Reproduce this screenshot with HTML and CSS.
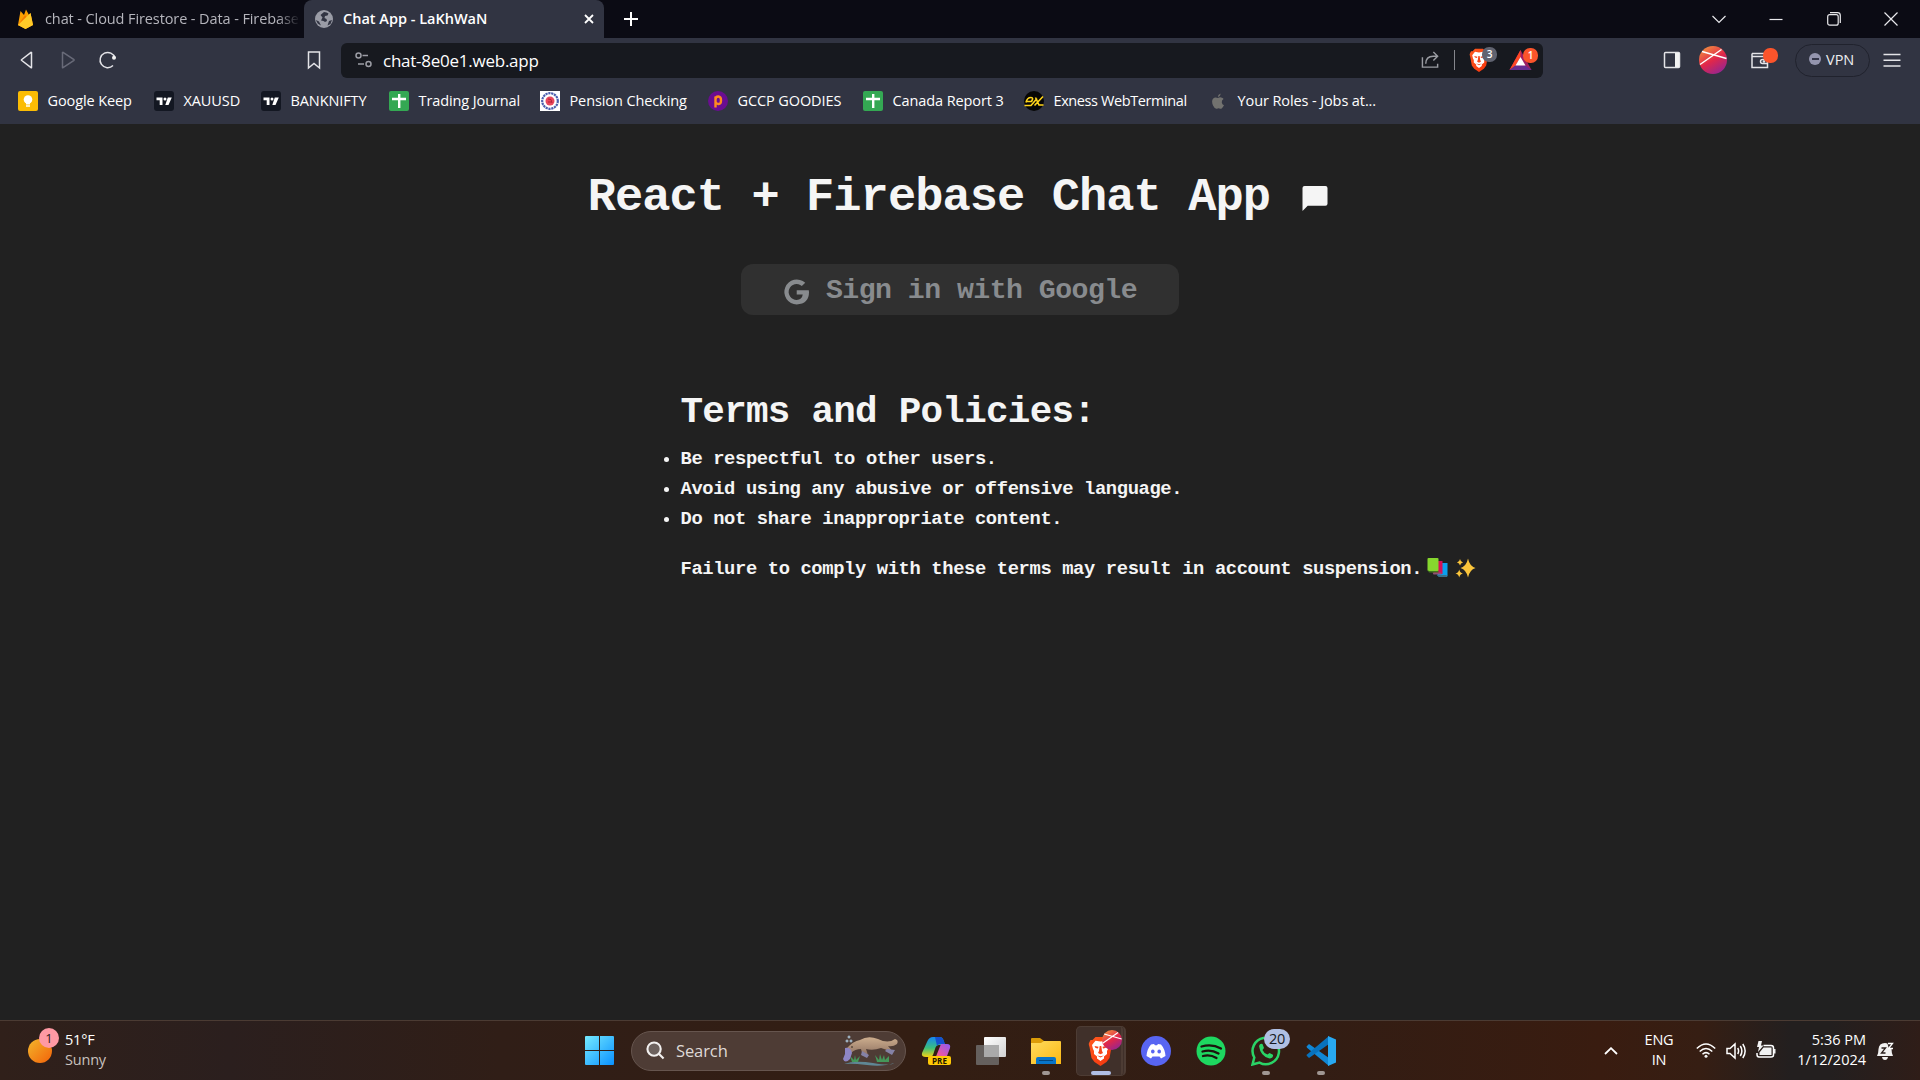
FILE: index.html
```html
<!DOCTYPE html>
<html lang="en">
<head>
<meta charset="utf-8">
<title>Chat App - LaKhWaN</title>
<link rel="stylesheet" href="styles.css">
</head>
<body>
<svg class="defs" width="0" height="0">
  <defs>
    <linearGradient id="ball" x1="0.2" y1="0" x2="0.8" y2="1"><stop offset="0" stop-color="#f2913f"/><stop offset=".5" stop-color="#e1274a"/><stop offset="1" stop-color="#8e2597"/></linearGradient>
    <linearGradient id="sun" x1="0" y1="0" x2="1" y2="1"><stop offset="0" stop-color="#f2b62c"/><stop offset="1" stop-color="#f36209"/></linearGradient>
    <linearGradient id="win" gradientUnits="userSpaceOnUse" x1="0" y1="0" x2="29" y2="29"><stop offset="0" stop-color="#75eaff"/><stop offset="1" stop-color="#0a91ff"/></linearGradient>
    <linearGradient id="fold" x1="0" y1="0" x2="1" y2="1"><stop offset="0" stop-color="#ffdc5e"/><stop offset="1" stop-color="#fbb813"/></linearGradient>
    <linearGradient id="cop1" x1="0" y1="0" x2="0" y2="1"><stop offset="0" stop-color="#1687f1"/><stop offset=".55" stop-color="#3bbf7c"/><stop offset="1" stop-color="#f6d512"/></linearGradient>
    <linearGradient id="cop2" x1="1" y1="0" x2="0" y2="1"><stop offset="0" stop-color="#8c5bf2"/><stop offset=".6" stop-color="#e556a8"/><stop offset="1" stop-color="#fa8b4b"/></linearGradient>
    <linearGradient id="white" x1="0" y1="0" x2="1" y2="1"><stop offset="0" stop-color="#fff"/><stop offset="1" stop-color="#d2d2d2"/></linearGradient>
    <linearGradient id="lionfill" x1="0" y1="0" x2="1" y2="1"><stop offset="0" stop-color="#ff5b20"/><stop offset="1" stop-color="#f5330c"/></linearGradient>
    <linearGradient id="fur" x1="0" y1="0" x2="0" y2="1"><stop offset="0" stop-color="#cdae8e"/><stop offset="1" stop-color="#8d7060"/></linearGradient>
    <symbol id="lion" viewBox="0 0 24 30">
      <path d="M7 1H17L20 4L22 4L24 8L23 11L21 22L18 26L12 30L6 26L3 22L1 11L0 8L2 4L4 4Z" fill="url(#lionfill)"/>
      <path d="M12 5.500L17 4.800L20.500 9L19.500 13L18.500 15L18.500 18L15.500 20.500L15.500 22.500L12 25L8.500 22.500L8.500 20.500L5.500 18L5.500 15L4.500 13L3.500 9L7 4.800Z" fill="#fff"/>
      <path d="M6 10L10 10.800L9.500 12.500L7 12ZM18 10L14 10.800L14.500 12.500L17 12ZM11.200 10H12.800L13.500 15L14.500 17L12 18.300L9.500 17L10.500 15ZM8.500 19.500L12 20.300L15.500 19.500L12 21.500Z" fill="#f8451a"/>
    </symbol>
    <symbol id="tv" viewBox="0 0 20 20"><rect width="20" height="20" rx="3" fill="#131722"/><path d="M2.500 6.500H8.500V14H5.700V9.300H2.500ZM13.800 6.500H17.800L14.500 14H11.300Z" fill="#fff"/><circle cx="11" cy="8" r="1.500" fill="#fff"/></symbol>
    <symbol id="sheet" viewBox="0 0 20 20"><rect width="20" height="20" rx="2" fill="#34a853"/><path d="M9 3H11.400V6.800H17V9.200H11.400V17H9V9.200H3V6.800H9Z" fill="#fff"/></symbol>
    <symbol id="ballmark" viewBox="0 0 28 28"><circle cx="14" cy="14" r="14" fill="url(#ball)"/><path d="M1 18.500L22.500 3.500M3 5.500L27.500 12.500" stroke="#fff" stroke-width="1.500" fill="none"/></symbol>
  </defs>
</svg>

<header class="browser">
  <div class="tabstrip">
    <div class="tab">
      <svg class="favicon" viewBox="0 0 20 22"><path d="M3 17L5.500 3L9 7L11 1.500L14 7L15.500 5L18 17L10.500 21Z" fill="#ffa000"/><path d="M3 17L10 7L13 11L3.500 17.500Z" fill="#f57c00"/><path d="M3 17L15.500 5L18 17L10.500 21Z" fill="#ffca28"/></svg>
      <span class="tab-title faded">chat - Cloud Firestore - Data - Firebase</span>
    </div>
    <div class="tab active">
      <svg class="favicon" viewBox="0 0 20 20"><circle cx="10" cy="10" r="9" fill="#9a9ca6"/><path d="M10 3Q13 3 14.500 4.500L13.500 6.500L11 7L10.500 9L12.500 10L13 12L11 13L9.500 12L7 11.500L8.500 8.500L6.500 6ZM2 11L5 12.500L7 16.500Q3 15 2 11ZM15 12L18 11L16.500 15L13.500 16.500Z" fill="#313442"/></svg>
      <span class="tab-title">Chat App - LaKhWaN</span>
      <svg class="close" viewBox="0 0 10 10"><path d="M1 1L9 9M9 1L1 9"/></svg>
    </div>
    <svg class="plus" viewBox="0 0 16 16"><path d="M8 1V15M1 8H15"/></svg>
    <div class="winbuttons">
      <svg viewBox="0 0 14 14"><path d="M.5 4L7 10.500L13.500 4"/></svg>
      <svg viewBox="0 0 14 14"><path d="M.5 7.500H13.500"/></svg>
      <svg viewBox="0 0 14 14"><rect x=".7" y="2.700" width="10.500" height="10.500" rx="2"/><path d="M3 .700H10.500Q13.300 .700 13.300 3.500V11"/></svg>
      <svg viewBox="0 0 14 14"><path d="M.5 .500L13.500 13.500M13.500 .500L.5 13.500"/></svg>
    </div>
  </div>

  <div class="toolbar">
    <div class="navgroup">
      <svg class="ico" viewBox="0 0 20 20"><path d="M13.500 2.500V17.500Q13.500 18 13 17.700L3.500 10.300Q3.200 10 3.500 9.700L13 2.300Z"/></svg>
      <svg class="ico dim" viewBox="0 0 20 20"><path d="M4.500 2.500V17.500Q4.500 18 5 17.700L16 10.300Q16.300 10 16 9.700L5 2.300Z"/></svg>
      <svg class="ico" viewBox="0 0 20 20"><path d="M15 15.500A7.600 7.600 0 1 1 17 8"/><circle cx="16" cy="7.800" r="2" class="solid"/></svg>
    </div>
    <svg class="ico mark" viewBox="0 0 20 20"><path d="M4.500 2H15.500V18L10 13.500L4.500 18Z"/></svg>
    <div class="urlbar">
      <svg class="ico site" viewBox="0 0 20 20"><circle cx="4.500" cy="5.500" r="2.500"/><path d="M8.500 5.500H14M4 14H10"/><circle cx="14.500" cy="14" r="2.500"/></svg>
      <span class="url">chat-8e0e1.web.app</span>
      <svg class="ico share" viewBox="0 0 20 20"><path d="M1.500 7V17.500H17.500V14M5 14Q5 6 13 6H17M13 1.500L17.500 6L13 10.500"/></svg>
      <span class="divider"></span>
      <span class="badged shield"><svg viewBox="0 0 24 30"><use href="#lion"/></svg><b class="gray">3</b></span>
      <span class="badged bat"><svg viewBox="0 0 22 20"><path d="M11 0L22 20H0Z" fill="#9e1f63"/><path d="M11 0L0 20L6 15.500L11 7Z" fill="#ff4724"/><path d="M0 20H22L16 15.500H6Z" fill="#662d91"/><path d="M11 7L16 15.500H6Z" fill="#fff"/></svg><b>1</b></span>
    </div>
    <div class="actions">
      <svg class="ico" viewBox="0 0 20 20"><rect x="2.500" y="2.500" width="15" height="15" rx="1"/><path class="solid" d="M13 3H17V17H13Z"/></svg>
      <svg class="avatar" viewBox="0 0 28 28"><use href="#ballmark"/></svg>
      <span class="badged wallet"><svg class="ico" viewBox="0 0 20 20"><path d="M2 3.500H15V6M2 3.500V17.500H17.500V6.500H2M17.500 9.500H12.500Q10.500 9.500 10.500 11.500T12.500 13.500H17.500"/><circle cx="14" cy="11.500" r=".6"/></svg><b></b></span>
      <span class="vpn"><i></i>VPN</span>
      <svg class="ico menu" viewBox="0 0 20 20"><path d="M1.500 4.500H18.500M1.500 10.300H18.500M1.500 16H18.500"/></svg>
    </div>
  </div>

  <nav class="bookmarks">
    <span><svg viewBox="0 0 20 20"><rect width="20" height="20" rx="2" fill="#fbbc04"/><circle cx="10" cy="8.500" r="4.300" fill="#fff"/><path d="M8 12H12V13.500H8ZM8 14.300H12V15.800H8Z" fill="#fff"/></svg>Google Keep</span>
    <span><svg viewBox="0 0 20 20"><use href="#tv"/></svg>XAUUSD</span>
    <span><svg viewBox="0 0 20 20"><use href="#tv"/></svg>BANKNIFTY</span>
    <span><svg viewBox="0 0 20 20"><use href="#sheet"/></svg>Trading Journal</span>
    <span><svg viewBox="0 0 20 20"><rect width="20" height="20" fill="#fff"/><circle cx="10" cy="10" r="7.800" fill="none" stroke="#4a5fae" stroke-width="2.200" stroke-dasharray="2.200 .7"/><circle cx="10" cy="10" r="4.500" fill="#e8485c"/><path d="M8 8L11 8.500L12 12M8 11H11" stroke="#b3203b" fill="none"/></svg>Pension Checking</span>
    <span><svg viewBox="0 0 20 20"><circle cx="10" cy="10" r="10" fill="#6a0d91"/><path d="M7.500 16.500V5.500M7.500 8.500Q7.500 5.500 10.300 5.500T13 9.500T10.300 13T7.500 10.500" fill="none" stroke="#ff8b1f" stroke-width="2.400"/></svg>GCCP GOODIES</span>
    <span><svg viewBox="0 0 20 20"><use href="#sheet"/></svg>Canada Report 3</span>
    <span class="tight"><svg viewBox="0 0 20 20"><circle cx="10" cy="10" r="10" fill="#060606"/><path d="M.5 14.500H7L13 7.500M2.500 10.500H7.500Q10 6.500 7 6.500Q3 6.500 2 11.500M10.500 14.500L19 5.500M11.500 6.500L15 14H19.500" fill="none" stroke="#ffd51a" stroke-width="1.600"/></svg>Exness WebTerminal</span>
    <span><svg viewBox="0 0 20 20"><path d="M10 7Q12 5.800 14 6.700Q15.300 7.200 15.500 8Q13.500 9.200 13.800 11.500Q14 13.500 16 14.200Q14 18 12.300 17.800Q10.500 17 9 17.700Q7 18.500 5 14.500Q3.200 10 5 7.700Q7 5.500 10 7ZM9.800 6Q9.800 3.500 12.500 2.500Q12.700 5.200 9.800 6Z" fill="#72726f"/></svg>Your Roles - Jobs at...</span>
  </nav>
</header>

<main class="page">
  <h1>React + Firebase Chat App <svg viewBox="0 0 24 24"><path d="M2 0H22Q24 0 24 2V17Q24 19 22 19H5L0 24V2Q0 0 2 0Z" fill="#f5f5f5"/></svg></h1>
  <button class="signin"><svg viewBox="0 0 24 24"><path d="M12.200 10.300V14.400H18Q17.200 19.600 12.200 19.600A7.600 7.600 0 1 1 17.100 6.300L20.400 3.100A12 12 0 1 0 12.200 24Q24 23.400 24 12.300L23.800 10.300Z" fill="#888b8e"/></svg>Sign in with Google</button>
  <section class="terms">
    <h2>Terms and Policies:</h2>
    <ul>
      <li>Be respectful to other users.</li>
      <li>Avoid using any abusive or offensive language.</li>
      <li>Do not share inappropriate content.</li>
    </ul>
    <p>Failure to comply with these terms may result in account suspension.<svg class="books" viewBox="0 0 20 20"><path d="M10 5H20V18H10Z" fill="#0aa0ee"/><path d="M10 17L19 17L20 19H11Z" fill="#38718c"/><path d="M6 3H15V16H6Z" fill="#d51056"/><path d="M5 14.500H14V16.500H6Z" fill="#8f5275"/><rect width="11" height="13" rx="1" fill="#86d62e"/><path d="M0 12L1.500 14.500H11V13H1.500Z" fill="#43751f"/></svg><svg class="sparkles" viewBox="0 0 20 20"><path d="M12.500 .5Q14 8 20 10Q14 12 12.500 19.500Q11 12 5 10Q11 8 12.500 .5ZM4.500 1Q5 4 7.500 4.500Q5 5 4.500 7.500Q4 5 1.500 4.500Q4 4 4.500 1ZM3.700 11.500Q4.500 15 7.400 15.500Q4.500 16 3.700 19.500Q3 16 0 15.500Q3 15 3.700 11.500Z" fill="#fbc53b"/></svg></p>
  </section>
</main>

<footer class="taskbar">
  <div class="weather">
    <span class="sunwrap"><svg viewBox="0 0 24 24"><circle cx="12" cy="12" r="12" fill="url(#sun)"/></svg><b>1</b></span>
    <div class="lines"><span>51°F</span><span class="sub">Sunny</span></div>
  </div>
  <div class="apps">
    <svg class="app start" viewBox="0 0 29 29"><path d="M0 1Q0 0 1 0H14V14H0ZM15 0H28Q29 0 29 1V14H15ZM0 15H14V29H1Q0 29 0 28ZM15 15H29V28Q29 29 28 29H15Z" fill="url(#win)"/></svg>
    <div class="search">
      <svg class="glass" viewBox="0 0 20 20"><circle cx="8.500" cy="8.500" r="7" fill="#6d625e"/><path d="M13.500 13.500L18.500 18.500"/></svg>
      <span>Search</span>
      <svg class="platypus" viewBox="0 0 56 32">
        <path d="M1 29Q12 25 30 28T51 28Q40 32 24 30T1 29Z" fill="#5f8795"/>
        <path d="M9 27L7 21L11 25L12 20L13 25L17 21L15 27ZM34 27L32 20L36 25L37 19L39 25L41 20L42 25L46 21L46 27Z" fill="#45975a"/>
        <path d="M3 14Q10 6 17 5Q25 0 35 4Q45 9 52 4Q56 5 54 9Q50 12 45 11L50 17L44 15L38 13Q30 16 23 14L25 20L20 21L18 14Q12 14 8 18Z" fill="url(#fur)"/>
        <path d="M44 14L52 15L49 20L42 16ZM19 16L26 20L24 23L18 20Z" fill="#8582a6"/>
        <path d="M2 13Q8 12 9 18L7 24Q2 29 0 24L2 19Z" fill="#8e86c5"/>
        <circle cx="9" cy="12" r=".8" fill="#241c19"/><g fill="none" stroke="#b9d9ef"><circle cx="4" cy="6" r="1"/><circle cx="8" cy="6" r="1"/><circle cx="6" cy="2" r="1"/></g>
      </svg>
    </div>
    <svg class="app" viewBox="0 0 30 30"><path d="M6 6Q8 1 12 1H19Q22 1 23 6L24 9H18Q15 9 14 13L12 19Q11 21 5 21Q0 21 1 17Z" fill="url(#cop1)"/><path d="M14 1H19Q22 1 24 8H19Q17 8 16 10Z" fill="#1450cf"/><path d="M20 8H26Q30 8 29 12L26 20Q25 23 21 23H11Q15 22 16 18Z" fill="url(#cop2)"/><rect x="7" y="20" width="23" height="9" rx="2" fill="#ffc905"/><text x="18.500" y="27.500" text-anchor="middle" class="pre">PRE</text></svg>
    <svg class="app" viewBox="0 0 30 30"><rect x="8" y="1" width="22" height="20" rx="1" fill="url(#white)"/><rect y="9" width="23" height="20" rx="1" fill="#777" fill-opacity=".75"/><path d="M8 9H23V21H8Z" fill="#aaa"/></svg>
    <span class="running"><svg class="app" viewBox="0 0 30 30"><path d="M0 3Q0 2 1 2H9L13 5V9H0Z" fill="#dc9c08"/><path d="M0 7H10L13 5H29Q30 5 30 6V28H0Z" fill="url(#fold)"/><path d="M5 28V23Q5 21 7 21H23Q25 21 25 23V28Z" fill="#0875c9"/><path d="M8 24.500H22" stroke="#03477f"/></svg></span>
    <span class="running current"><svg class="lionapp" viewBox="0 0 24 30"><use href="#lion"/></svg><svg class="overlay" viewBox="0 0 28 28"><use href="#ballmark"/></svg></span>
    <svg class="app" viewBox="0 0 30 30"><circle cx="15" cy="15" r="15" fill="#5865f2"/><path d="M10 8.500L13 8L14 9.200H16L17 8L20 8.500Q24 13 24.500 20L20 22.500L18.500 20.500H11.500L10 22.500L5.500 20Q6 13 10 8.500Z" fill="#fff"/><ellipse cx="11.800" cy="15.500" rx="1.800" ry="2" fill="#5865f2"/><ellipse cx="18.200" cy="15.500" rx="1.800" ry="2" fill="#5865f2"/></svg>
    <svg class="app" viewBox="0 0 30 30"><circle cx="15" cy="15" r="14.500" fill="#1ed760"/><path d="M5.500 10.500Q16 7.500 25 12.500M6.500 15.500Q15 13 22.500 17.500M7 20Q14 18 20.500 22" fill="none" stroke="#1c130e" stroke-width="2.300" stroke-linecap="round"/></svg>
    <span class="running wa"><svg class="app" viewBox="0 0 30 30"><path d="M1.500 28.500L3.300 21.500A13.200 13.200 0 1 1 8.500 26.600Z" fill="none" stroke="#2ad366" stroke-width="2.500"/><path d="M8 10Q9 7 11.500 8L13 12L11.500 14Q13 17.500 16.500 18.500L18.500 17L22 18.700Q22.500 22 18.500 22.500Q9.500 20.500 8 10Z" fill="#2ad366"/></svg><b>20</b></span>
    <span class="running"><svg class="app" viewBox="0 0 30 30"><path d="M.5 10.500L3 8L23 22V30L1 11.700Z" fill="#1187d5"/><path d="M.5 19.500L3 22L23 8V0L1 18.500Z" fill="#0872bd"/><path d="M22 0L30 3.500V26.500L22 30Z" fill="#28a9f2"/></svg></span>
  </div>
  <div class="tray">
    <svg class="caret" viewBox="0 0 14 8"><path d="M1 7L7 1.200L13 7"/></svg>
    <div class="lines lang"><span>ENG</span><span>IN</span></div>
    <svg class="ico" viewBox="0 0 20 20"><path d="M.8 7.500Q10-1.500 19.200 7.500M3.700 10.500Q10 4.500 16.300 10.500M6.500 13.300Q10 10 13.500 13.300"/><circle cx="10" cy="15.300" r="1.500" class="solid"/></svg>
    <svg class="ico" viewBox="0 0 20 20"><path d="M1 7.500H4L9 3V17L4 12.500H1ZM11.700 7Q13.500 10 11.700 13M14.300 5Q17.500 10 14.300 15M16.800 3Q21.500 10 16.800 17"/></svg>
    <svg class="ico" viewBox="0 0 20 20"><path d="M7.500 4.500H15Q17.500 4.500 17.500 7V14Q17.500 16 15 16H3Q1 16 1 13.500V12"/><path class="solid" d="M7.500 6.500H15.500V14H3.500V11.500ZM18 8H19.500V12.500H18ZM2.500 0L1 6H3L2 11L7.500 4.500H5L6 0Z"/></svg>
    <div class="lines clock"><span>5:36 PM</span><span>1/12/2024</span></div>
    <svg class="ico bell" viewBox="0 0 20 20"><path class="solid" d="M2 15Q3.500 12 3.500 8Q4 2 10 2Q16 2 16.500 8Q16.500 12 18 15ZM7 16H13Q12.500 19 10 19T7 16Z"/><path d="M6.500 7H10.500L6.500 12H10.500" class="zz"/><path d="M12 1H19V8H14Z" class="cut"/><path d="M13 2.500H17.500L13.500 7.500H18" class="zlight"/></svg>
  </div>
</footer>
</body>
</html>
```
FILE: styles.css
```css
* { box-sizing: border-box; }
body {
  margin: 0;
  width: 1920px;
  height: 1080px;
  overflow: hidden;
  display: flex;
  flex-direction: column;
  background: #212121;
  color: #fff;
  font-family: "Open Sans", "Noto Sans", sans-serif;
}
svg { display: block; flex: none; }
.defs { position: absolute; }

.browser { height: 124px; background: #313442; flex: none; }
.tabstrip { height: 38px; display: flex; align-items: center; background: #0b0b14; }
.tab { width: 304px; height: 38px; display: flex; align-items: center; padding-left: 15px; overflow: hidden; }
.tab .favicon { width: 20px; height: 22px; margin-right: 10px; }
.tab-title { font-size: 14.5px; letter-spacing: -0.1px; padding-bottom: 2px; white-space: nowrap; color: #b5b5bc; }
.tab-title.faded {
  width: 255px;
  overflow: hidden;
  -webkit-mask-image: linear-gradient(90deg, #000 91%, transparent);
  mask-image: linear-gradient(90deg, #000 91%, transparent);
}
.tab.active { width: 300px; padding-left: 10px; background: #313442; border-radius: 8px 8px 0 0; }
.tab.active .tab-title { color: #fff; font-weight: 600; width: 239px; letter-spacing: 0; }
.tab.active .favicon { margin-right: 9px; }
.close { width: 10px; height: 10px; margin-left: 2px; }
.close path, .plus path { stroke: #fff; stroke-width: 1.8; fill: none; }
.plus { width: 16px; height: 16px; margin-left: 19px; }
.plus path { stroke-width: 2; }
.winbuttons { margin-left: auto; display: flex; gap: 43.500px; padding-right: 22px; }
.winbuttons svg { width: 14px; height: 14px; fill: none; stroke: #e9e9ec; stroke-width: 1.2; }

.ico { width: 20px; height: 20px; fill: none; stroke: #e4e4e8; stroke-width: 1.5; }
.ico .solid { fill: #f2f2f2; stroke: none; }
.ico.dim { stroke: #686a78; }
.toolbar { height: 44px; display: flex; align-items: center; padding-left: 18px; }
.navgroup { display: flex; gap: 20px; width: 286px; }
.mark { margin-right: 17px; }
.urlbar { width: 1202px; height: 35px; background: #17191f; border-radius: 6px; display: flex; align-items: center; }
.site { margin-left: 13px; stroke: #9c9da5; }
.url { width: 1047px; padding-left: 9px; font-size: 17px; letter-spacing: -0.25px; }
.share { stroke: #9a9ca2; width: 19px; margin-right: 14px; }
.divider { width: 1px; height: 20px; background: #85868c; margin-right: 14px; }
.badged { position: relative; flex: none; }
.badged b {
  position: absolute;
  left: 13px;
  top: -3px;
  width: 15px;
  height: 15px;
  border-radius: 7px;
  background: #fb542b;
  font: 600 10px/15px "Open Sans", sans-serif;
  text-align: center;
}
.badged b.gray { background: #606370; top: -1px; }
.shield svg { width: 20px; height: 24px; }
.bat { margin-left: 20px; }
.bat svg { width: 23px; height: 20px; }
.bat b { left: 14px; top: -2px; }
.actions { display: flex; align-items: center; }
.actions > .ico:first-child { margin-left: 119px; margin-right: 17px; }
.avatar { width: 28px; height: 28px; margin-right: 23px; }
.wallet { margin-right: 25px; }
.wallet b { left: 13px; top: -2px; }
.vpn {
  width: 75px;
  height: 33px;
  border: 1px solid #20222d;
  border-radius: 17px;
  display: flex;
  align-items: center;
  padding-left: 13px;
  padding-bottom: 2px;
  gap: 5px;
  color: #ededf0;
  font-size: 14.5px;
}
.vpn i { width: 12px; height: 12px; border-radius: 50%; background: linear-gradient(#333548, #333548) center / 7px 2px no-repeat #9495ae; }
.menu { margin-left: 12px; }

.bookmarks {
  height: 38px;
  padding-left: 18px;
  display: grid;
  grid-template-columns: 136px 107px 128px 151px 168px 155px 161px 184px 200px;
  align-items: center;
  font-size: 14.5px;
  line-height: 18px;
  letter-spacing: -0.1px;
  white-space: nowrap;
}
.bookmarks span { display: flex; align-items: center; gap: 9.500px; }
.bookmarks .tight { letter-spacing: -0.4px; }
.bookmarks svg { width: 20px; height: 20px; }

.page {
  flex: 1;
  display: flex;
  flex-direction: column;
  align-items: center;
  color: #f5f5f5;
  font-family: "Liberation Mono", "DejaVu Sans Mono", monospace;
  font-weight: 700;
}
.page h1, .page h2, .page p, .page li, .signin { letter-spacing: -0.0194em; white-space: pre; }
.page h1 { margin: 42px 0 0; display: flex; font-size: 47px; line-height: 64px; }
.page h1 svg { width: 26px; height: 25px; margin: 20px 4px 0 5px; }
.signin {
  width: 438px;
  height: 51px;
  margin-top: 34px;
  padding: 2px 0 0 43px;
  border: 0;
  border-radius: 12px;
  background: #303030;
  color: #888b8e;
  font-family: inherit;
  font-weight: 700;
  font-size: 28.2px;
  display: flex;
  align-items: center;
}
.signin svg { width: 25px; height: 26px; margin-right: 17px; margin-top: 3px; }
.terms { width: 559px; margin-top: 72px; font-size: 18.8px; }
.terms h2 { margin: 0; font-size: 37.6px; line-height: 50px; }
.terms ul { margin: 7px 0 0; padding: 0; }
.terms li { line-height: 30px; }
.terms p { margin: 20px 0 0; line-height: 30px; display: flex; align-items: center; }
.books { width: 21px; height: 20px; margin: -2px 0 0 5px; }
.sparkles { width: 21px; height: 20px; margin: -2px 0 0 7px; }

.taskbar {
  flex: none;
  height: 60px;
  border-top: 1px solid #4b3b33;
  display: flex;
  align-items: center;
  background: linear-gradient(90deg, #30201a 0, #2b1f1e 230px, #301e17 500px, #331e13 900px, #321d14 1300px, #391c10 1600px, #361e13 1700px, #231f1f 1790px, #231f1f 1830px, #2f1d18 1920px);
}
.weather { width: 571px; display: flex; padding-left: 28px; align-items: center; }
.sunwrap { position: relative; margin-right: 13px; }
.sunwrap svg { width: 24px; height: 24px; }
.sunwrap b {
  position: absolute;
  left: 11px;
  top: -11px;
  width: 20px;
  height: 20px;
  border-radius: 50%;
  background: #ff99a4;
  color: #321a1a;
  font: 13px/20px "Open Sans", sans-serif;
  text-align: center;
}
.lines { display: flex; flex-direction: column; padding-bottom: 2px; font-size: 14.5px; line-height: 20px; letter-spacing: -0.2px; }
.sub { color: #c9c2bf; }
.apps { width: 790px; flex: none; display: flex; align-items: center; }
.apps > * { flex: none; }
.app { width: 30px; height: 30px; margin-right: 25px; }
.apps .start { width: 29px; height: 29px; margin: 0 17px 0 14px; }
.search {
  width: 275px;
  height: 40px;
  margin-right: 15px;
  padding-left: 14px;
  border: 1px solid #66554e;
  border-radius: 20px;
  background: #4e3c35;
  display: flex;
  align-items: center;
  font-size: 16.5px;
  letter-spacing: -0.1px;
  color: #dfd9d6;
}
.search span { width: 167px; padding-bottom: 1px; }
.glass { width: 19px; height: 19px; margin-right: 11px; fill: none; stroke: #f2f0ef; stroke-width: 2.2; }
.platypus { width: 56px; height: 32px; }
.pre { font: 700 8px "Open Sans", sans-serif; fill: #1d1700; }
.running { position: relative; height: 50px; display: flex; align-items: center; }
.running::after {
  content: "";
  position: absolute;
  left: 11px;
  bottom: 1px;
  width: 8px;
  height: 4px;
  border-radius: 2px;
  background: #a09793;
}
.current { width: 50px; margin: 0 15px 0 -10px; border-radius: 5px; background: #40302a; border: 1px solid #4d3c34; border-right: 5px double #4d3c34; }
.current::after { left: 14px; width: 20px; background: #b0bfe6; bottom: 0; }
.lionapp { width: 25px; height: 30px; margin-left: 11px; }
.overlay { position: absolute; left: 25px; top: 3px; width: 20px; height: 20px; }
.wa b {
  position: absolute;
  left: 13px;
  top: 3px;
  width: 26px;
  height: 20px;
  border-radius: 10px;
  background: #b0c0e4;
  color: #171a22;
  font: 14.5px/20px "Open Sans", sans-serif;
  letter-spacing: -0.4px;
  text-align: center;
}
.tray { flex: 1; display: flex; align-items: center; justify-content: flex-end; padding-right: 25px; }
.tray .ico { stroke: #fff; margin-right: 10px; flex: none; }
.caret { width: 14px; height: 8px; fill: none; stroke: #fff; stroke-width: 1.8; margin-right: 26px; }
.lang { width: 30px; align-items: center; margin-right: 22px; }
.clock { width: 80px; align-items: flex-end; margin-right: 9px; letter-spacing: 0; }
.tray .bell { margin-right: 0; }
.ico .zz { stroke: #2a1f1d; stroke-width: 1.3; }
.ico .cut { fill: #2a1f1d; stroke: none; }
.ico .zlight { stroke: #fff; stroke-width: 1.3; }
```
